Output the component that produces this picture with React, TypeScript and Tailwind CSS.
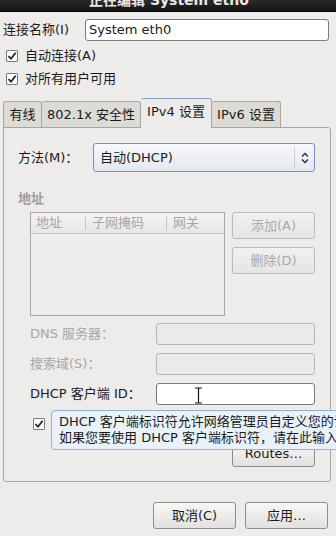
import React from "react";

const FONT = { fontFamily: '"DejaVu Sans", "Noto Sans CJK SC", sans-serif' };

function Check({ className = "" }: { className?: string }) {
  return (
    <div className={`w-[12px] h-[12px] border border-[#7c7b78] bg-[#fbfbfb] rounded-[1px] flex items-center justify-center shrink-0 ${className}`}>
      <svg width="10" height="10" viewBox="0 0 10 10">
        <path d="M1.5 5.2 L4 7.8 L8.6 1.8" stroke="#1f1f1f" strokeWidth="1.7" fill="none" />
      </svg>
    </div>
  );
}

function Btn({ children, disabled = false, className = "" }: { children: React.ReactNode; disabled?: boolean; className?: string }) {
  return (
    <div
      className={`h-[27px] w-[83px] rounded-[3px] border flex items-center justify-center bg-gradient-to-b ${
        disabled
          ? "border-[#bcbab6] from-[#f2f1f0] to-[#e6e5e3] text-[#a9a9a9]"
          : "border-[#8e8c88] from-[#f7f7f6] to-[#e2e1df] text-[#1a1a1a]"
      } ${className}`}
    >
      {children}
    </div>
  );
}

export default function App() {
  return (
    <div className="w-[336px] h-[536px] bg-[#edeceb] overflow-hidden relative text-[13px] text-[#1a1a1a]" style={FONT}>
      {/* Title bar */}
      <div className="h-[12px] bg-gradient-to-b from-[#2a2a2a] to-[#141414] overflow-hidden flex justify-center border-b border-[#000]">
        <div className="-mt-[8px] leading-[16px] text-[14px] font-bold text-[#e8e8e8] whitespace-nowrap pl-[2px]">正在编辑 System eth0</div>
      </div>

      {/* Connection name */}
      <div className="mt-[7px] h-[22px] flex items-center">
        <div className="pl-[3px] w-[85px] whitespace-nowrap">连接名称(I)</div>
        <div className="w-[244px] h-[22px] rounded-[3px] border border-[#7b7a77] bg-white flex items-center pl-[3px] whitespace-nowrap">System eth0</div>
      </div>

      {/* Checkboxes */}
      <div className="mt-[3px] h-[23px] flex items-center pl-[6px] gap-[7px]">
        <Check />
        <span className="whitespace-nowrap">自动连接(A)</span>
      </div>
      <div className="h-[23px] flex items-center pl-[6px] gap-[7px]">
        <Check />
        <span className="whitespace-nowrap">对所有用户可用</span>
      </div>

      {/* Tabs */}
      <div className="mt-[8px] h-[29px] flex items-end pl-[3px] relative z-10">
        <div className="w-[39px] h-[26px] border border-b-0 border-[#a7a5a0] rounded-t-[3px] bg-[#dddbd6] flex items-center justify-center whitespace-nowrap">有线</div>
        <div className="w-[99px] h-[26px] border border-b-0 border-l-0 border-[#a7a5a0] rounded-t-[3px] bg-[#dddbd6] flex items-center justify-center whitespace-nowrap">802.1x 安全性</div>
        <div className="w-[71px] h-[30px] -mb-px border border-b-0 border-l-0 border-[#a7a5a0] border-t-[#86a0c6] rounded-t-[3px] bg-[#edeceb] flex items-center justify-center whitespace-nowrap pb-[3px]">IPv4 设置</div>
        <div className="w-[69px] h-[26px] border border-b-0 border-l-0 border-[#a7a5a0] rounded-t-[3px] bg-[#dddbd6] flex items-center justify-center whitespace-nowrap">IPv6 设置</div>
      </div>

      {/* Panel */}
      <div className="ml-[3px] w-[328px] h-[355px] border border-[#a7a5a0] rounded-b-[3px] rounded-tr-[3px] flex flex-col">
        {/* Method */}
        <div className="mt-[15px] flex items-center pl-[14px]">
          <div className="w-[75px] whitespace-nowrap">方法(M)：</div>
          <div className="w-[222px] h-[29px] rounded-[3px] border border-[#6e8fc4] bg-gradient-to-b from-[#f6f8fb] to-[#e3e8f0] flex items-center pl-[6px]">
            <span className="flex-1 whitespace-nowrap">自动(DHCP)</span>
            <div className="w-px h-[22px] bg-[#c9ccd1]" />
            <div className="w-[19px] flex items-center justify-center">
              <svg width="8" height="12" viewBox="0 0 8 12">
                <path d="M1 4.5 L4 1.5 L7 4.5 M1 7.5 L4 10.5 L7 7.5" stroke="#2a2a2a" strokeWidth="1.3" fill="none" />
              </svg>
            </div>
          </div>
        </div>

        {/* Address section */}
        <div className="mt-[18px] h-[17px] pl-[14px] font-bold text-[#9e9e9e] leading-[17px]">地址</div>
        <div className="mt-[5px] flex pl-[26px]">
          <div className="w-[195px] h-[104px] border border-[#a9a8a5] bg-[#efeeec] flex flex-col">
            <div className="h-[21px] flex items-center border-b border-[#c6c5c2] bg-gradient-to-b from-[#f4f3f2] to-[#e8e7e5] text-[#a6a6a6]">
              <div className="w-[54px] pl-[5px] whitespace-nowrap">地址</div>
              <div className="w-px h-[13px] bg-[#c2c1be]" />
              <div className="w-[80px] pl-[6px] whitespace-nowrap">子网掩码</div>
              <div className="w-px h-[13px] bg-[#c2c1be]" />
              <div className="pl-[6px] whitespace-nowrap">网关</div>
            </div>
          </div>
          <div className="ml-[7px] flex flex-col gap-[8px]">
            <Btn disabled>添加(A)</Btn>
            <Btn disabled>删除(D)</Btn>
          </div>
        </div>

        {/* Fields */}
        <div className="mt-[7px] flex items-center pl-[26px]">
          <div className="w-[126px] text-[#a6a6a6] whitespace-nowrap">DNS 服务器：</div>
          <div className="w-[159px] h-[22px] rounded-[3px] border border-[#b6b5b2] bg-[#eaeae8]" />
        </div>
        <div className="mt-[8px] flex items-center pl-[26px]">
          <div className="w-[126px] text-[#a6a6a6] whitespace-nowrap">搜索域(S)：</div>
          <div className="w-[159px] h-[22px] rounded-[3px] border border-[#b6b5b2] bg-[#eaeae8]" />
        </div>
        <div className="mt-[8px] flex items-center pl-[26px]">
          <div className="w-[126px] whitespace-nowrap">DHCP 客户端 ID：</div>
          <div className="w-[159px] h-[22px] rounded-[3px] border border-[#7b7a77] bg-white" />
        </div>

        <div className="mt-[13px] pl-[29px]">
          <Check />
        </div>
        <div className="mt-[10px] pl-[228px]">
          <Btn>Routes…</Btn>
        </div>
      </div>

      {/* Bottom buttons */}
      <div className="mt-[20px] flex justify-end pr-[8px] gap-[9px]">
        <Btn className="w-[82px]">取消(C)</Btn>
        <Btn className="w-[82px]">应用…</Btn>
      </div>

      {/* I-beam cursor */}
      <svg className="absolute left-[194px] top-[387px]" width="9" height="17" viewBox="0 0 9 17">
        <path d="M1 1 H8 M4.5 1 V16 M1 16 H8" stroke="#fff" strokeWidth="3" fill="none" />
        <path d="M1 1 H8 M4.5 1 V16 M1 16 H8" stroke="#111" strokeWidth="1.2" fill="none" />
      </svg>

      {/* Tooltip */}
      <div className="absolute left-[51px] top-[410px] w-[320px] h-[40px] rounded-[4px] border border-[#8fb1dc] bg-[#e9f2fb] pl-[7px] pt-[3px] leading-[16px] whitespace-nowrap text-[#1a1a1a]">
        <div>DHCP 客户端标识符允许网络管理员自定义您的计算机</div>
        <div>如果您要使用 DHCP 客户端标识符，请在此输入</div>
      </div>
    </div>
  );
}
